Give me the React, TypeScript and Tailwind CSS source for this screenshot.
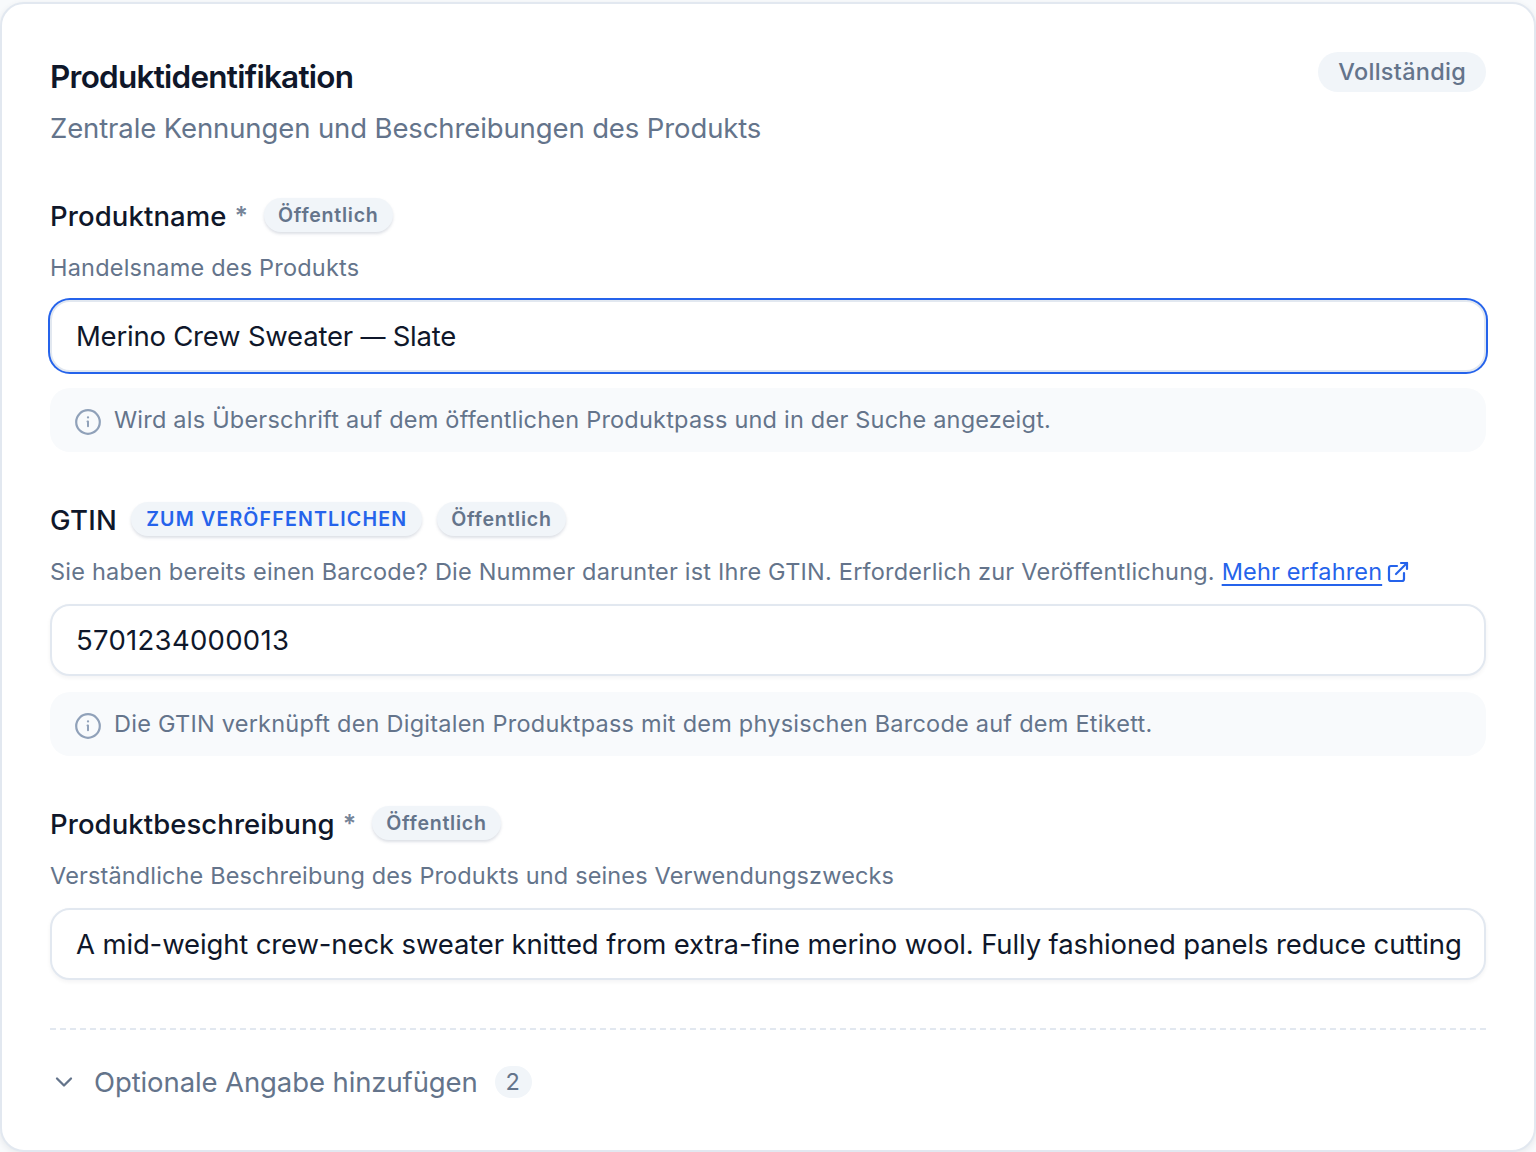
import type { ReactNode } from 'react';

function InfoIcon() {
  return (
    <svg className="size-7 shrink-0 text-slate-400" viewBox="0 0 28 28" fill="none" stroke="currentColor" strokeLinecap="round" strokeLinejoin="round">
      <circle cx="14" cy="14" r="11.8" strokeWidth="2.2" />
      <path d="M13.5 13.6h.5v4.6" strokeWidth="2" />
      <path d="M14 9.4h.01" strokeWidth="2.3" />
    </svg>
  );
}

function ExternalLinkIcon() {
  return (
    <svg className="ml-1 inline-block size-6 align-[-4px] text-[#2563eb]" viewBox="0 0 24 24" fill="none" stroke="currentColor" strokeWidth="2.2" strokeLinecap="round" strokeLinejoin="round">
      <path d="M15 3h6v6" />
      <path d="M10 14 21 3" />
      <path d="M18 13v6a2 2 0 0 1-2 2H5a2 2 0 0 1-2-2V8a2 2 0 0 1 2-2h6" />
    </svg>
  );
}

function Pill({ children, tone = 'muted' }: { children: ReactNode; tone?: 'muted' | 'accent' }) {
  const text =
    tone === 'accent'
      ? 'mr-px px-[15px] tracking-[1.15px] text-[#2563eb]'
      : 'px-[14px] tracking-[0.72px] text-[#64748b]';
  return (
    <span className={`mb-0.5 flex h-[34px] items-center rounded-full bg-slate-100 text-[19.6px] leading-[34px] font-semibold shadow-[0_2px_3px_0_rgb(100_116_139/0.22)] ${text}`}>
      {children}
    </span>
  );
}

function Label({ text, required, tracking = 'tracking-[0.11px]' }: { text: string; required?: boolean; tracking?: string }) {
  return (
    <span className={`text-[27.5px] leading-9 font-medium text-[#0f172a] ${tracking}`}>
      {text}
      {required && <span className="relative -top-px ml-2 text-[25px] font-semibold tracking-normal text-[#64748b]/90">*</span>}
    </span>
  );
}

function Hint({ children, tracking }: { children: ReactNode; tracking: string }) {
  return (
    <div className="mt-4 flex h-16 items-center gap-3 rounded-[20px] bg-slate-50 px-6">
      <span className="pt-1">
        <InfoIcon />
      </span>
      <span className={`text-[23.5px] leading-8 whitespace-nowrap text-[#64748b] ${tracking}`}>{children}</span>
    </div>
  );
}

function Input({ children, focused, tracking }: { children: ReactNode; focused?: boolean; tracking: string }) {
  return (
    <div
      className={`mt-3 flex h-[72px] items-center rounded-[20px] border-2 border-slate-200 bg-white px-6 pt-0.5 text-[27.5px] whitespace-nowrap text-[#0f172a] ${tracking} ${
        focused ? 'shadow-[0_0_0_2px_#2563eb]' : 'shadow-[0_2px_4px_0_rgb(15_23_42/0.05)]'
      }`}
    >
      {children}
    </div>
  );
}

function Help({ children, tracking }: { children: ReactNode; tracking: string }) {
  return <p className={`mt-[14px] h-10 text-[23.5px] leading-10 whitespace-nowrap text-[#64748b] ${tracking}`}>{children}</p>;
}

export default function App() {
  return (
    <div className="h-[1152px] w-[1536px] overflow-hidden bg-slate-50 pt-0.5 font-['Inter',sans-serif] antialiased">
      <section className="h-[1150px] rounded-3xl border-2 border-slate-200 bg-white px-12 pt-12 shadow-[0_2px_6px_0_rgb(15_23_42/0.08)]">
        <header className="flex items-start justify-between">
          <div>
            <h2 className="text-[31.5px] leading-[49px] font-semibold tracking-[-0.75px] text-[#0f172a]">Produktidentifikation</h2>
            <p className="mt-[7px] text-[27.5px] leading-10 tracking-[-0.115px] text-[#64748b]">
              Zentrale Kennungen und Beschreibungen des Produkts
            </p>
          </div>
          <span className="flex h-10 items-center rounded-full bg-slate-100 px-5 text-[23.5px] font-medium tracking-[0.27px] text-[#64748b]">
            Vollständig
          </span>
        </header>

        <div className="mt-[50px]">
          <div className="flex h-9 items-center gap-4">
            <Label text="Produktname" required />
            <Pill>Öffentlich</Pill>
          </div>
          <Help tracking="tracking-[0.205px]">Handelsname des Produkts</Help>
          <Input focused tracking="tracking-[-0.22px]">
            <span>
              Merino Crew Sweater <span className="text-[25px]">—</span> Slate
            </span>
          </Input>
          <Hint tracking="tracking-[0.214px]">
            Wird als Überschrift auf dem öffentlichen Produktpass und in der Suche angezeigt.
          </Hint>
        </div>

        <div className="mt-[50px]">
          <div className="flex h-9 items-center gap-[14px]">
            <Label text="GTIN" tracking="tracking-[0.3px]" />
            <Pill tone="accent">ZUM VERÖFFENTLICHEN</Pill>
            <Pill>Öffentlich</Pill>
          </div>
          <Help tracking="tracking-[0.212px]">
            Sie haben bereits einen Barcode? Die Nummer darunter ist Ihre GTIN. Erforderlich zur Veröffentlichung.{' '}
            <a className="tracking-[0.14px] text-[#2563eb] underline decoration-2 underline-offset-4">Mehr erfahren</a>
            <ExternalLinkIcon />
          </Help>
          <Input tracking="tracking-[0.29px]">5701234000013</Input>
          <Hint tracking="tracking-[0.238px]">
            Die GTIN verknüpft den Digitalen Produktpass mit dem physischen Barcode auf dem Etikett.
          </Hint>
        </div>

        <div className="mt-[50px]">
          <div className="flex h-9 items-center gap-4">
            <Label text="Produktbeschreibung" required tracking="tracking-[0.07px]" />
            <Pill>Öffentlich</Pill>
          </div>
          <Help tracking="tracking-[0.135px]">Verständliche Beschreibung des Produkts und seines Verwendungszwecks</Help>
          <Input tracking="tracking-[-0.135px]">
            A mid-weight crew-neck sweater knitted from extra-fine merino wool. Fully fashioned panels reduce cutting
          </Input>
        </div>

        <div className="mt-12 border-t-2 border-dashed border-slate-200 pt-8">
          <button className="flex h-10 items-center text-[27.5px] tracking-[-0.105px] text-[#64748b]">
            <svg className="size-7" viewBox="0 0 28 28" fill="none" stroke="currentColor" strokeWidth="2.3" strokeLinecap="round" strokeLinejoin="round">
              <path d="m7 10.5 7 7 7-7" />
            </svg>
            <span className="ml-4 pt-0.5">Optionale Angabe hinzufügen</span>
            <span className="ml-[17px] flex h-8 w-[37px] items-center justify-center rounded-full bg-slate-100 pr-px text-[23.5px] tracking-normal">2</span>
          </button>
        </div>
      </section>
    </div>
  );
}
